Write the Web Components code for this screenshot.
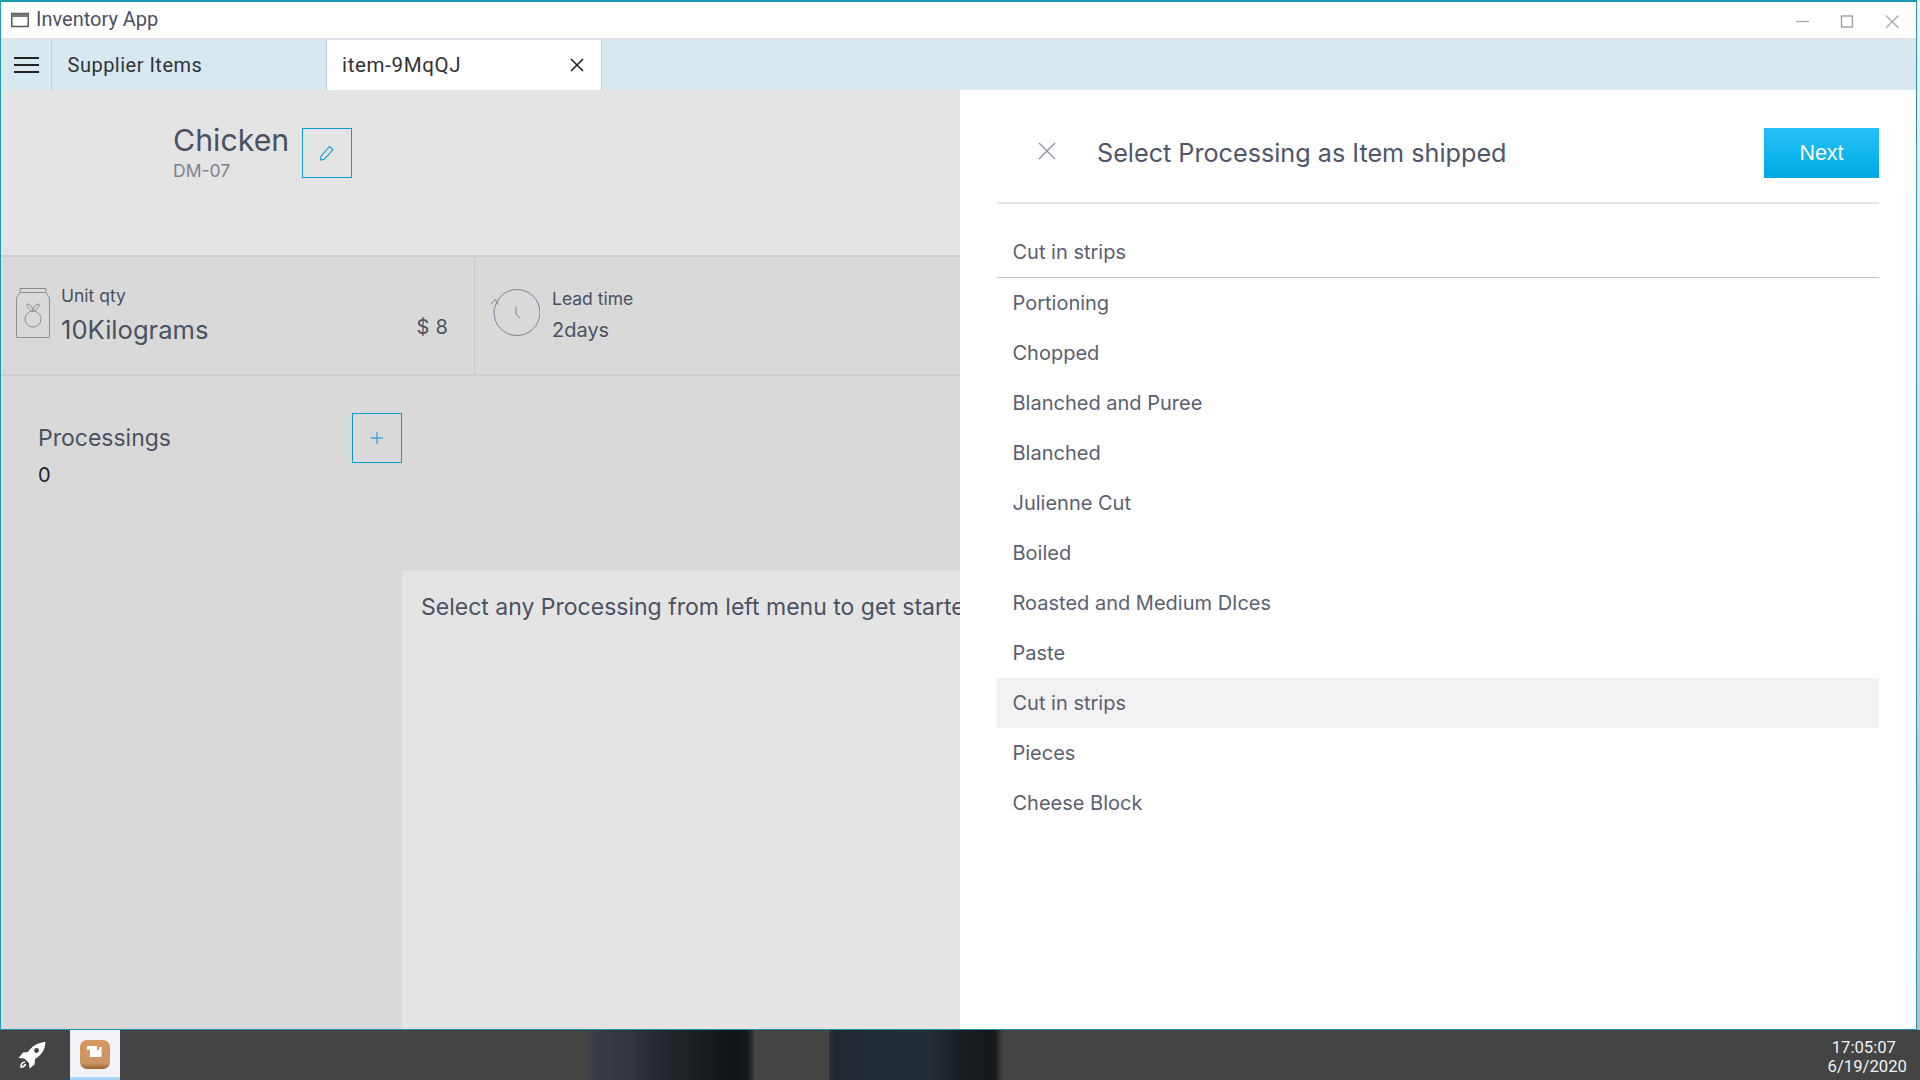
<!DOCTYPE html>
<html>
<head>
<meta charset="utf-8">
<title>Inventory App</title>
<style>
  html, body { margin: 0; height: 100%; overflow: hidden; }
  body { font-family: Inter, "Liberation Sans", sans-serif; background: #444; }
</style>
</head>
<body>
<app-desktop>
  <app-window>
    <app-tabs></app-tabs>
    <div style="display:flex;flex:1;min-height:0;">
      <item-detail></item-detail>
      <processing-panel heading="Select Processing as Item shipped" items='["Cut in strips","Portioning","Chopped","Blanched and Puree","Blanched","Julienne Cut","Boiled","Roasted and Medium DIces","Paste","Cut in strips","Pieces","Cheese Block"]'></processing-panel>
    </div>
  </app-window>
  <app-taskbar></app-taskbar>
</app-desktop>
<script>
class appDesktop extends HTMLElement {
  constructor() {
    super();
    this.attachShadow({mode: 'open'}).innerHTML = `
      <style>
        :host { display:flex; flex-direction:column; width:1920px; height:1080px; background:linear-gradient(#f4f4f4,#bbb); }
      </style>
      <slot></slot>`;
  }
}
customElements.define('app-desktop', appDesktop);

class appWindow extends HTMLElement {
  constructor() {
    super();
    this.attachShadow({mode: 'open'}).innerHTML = `
      <style>
        :host { display:flex; flex-direction:column; width:1917px; height:1030px; flex:none; box-sizing:border-box; background:#fff;
          border:1px solid #1d9bb5; border-top-width:2px; border-bottom-color:#1d8fa8; }
        .title { display:flex; align-items:center; height:36px; flex:none; border-bottom:2px solid #dfe3e8; }
        .title svg.logo { margin-left:10px; margin-right:7px; }
        .title span { font:20px Roboto, sans-serif; color:#4a5163; position:relative; top:-1px; }
        .ctl { margin-left:auto; display:flex; margin-right:1px; }
        .ctl svg { width:45px; height:36px; display:block; }
      </style>
      <div class="title">
        <svg class="logo" width="18" height="16" viewBox="0 0 18 16"><rect x=".8" y="1.500" width="16.400" height="13" fill="none" stroke="#555" stroke-width="1.500"/><rect x=".8" y="1.500" width="16.400" height="3.500" fill="#777"/></svg>
        <span>Inventory App</span>
        <div class="ctl">
          <svg viewBox="0 0 45 36"><path d="M16 19.500h13" stroke="#aaa" stroke-width="1.400"/></svg>
          <svg viewBox="0 0 45 36"><rect x="16.500" y="14" width="11" height="11" fill="none" stroke="#a0a0a0" stroke-width="1.400"/></svg>
          <svg viewBox="0 0 45 36"><path d="M16 13.500l12.500 12.500M28.500 13.500L16 26" stroke="#aaa" stroke-width="1.300"/></svg>
        </div>
      </div>
      <slot></slot>`;
  }
}
customElements.define('app-window', appWindow);

class appTabs extends HTMLElement {
  constructor() {
    super();
    this.attachShadow({mode: 'open'}).innerHTML = `
      <style>
        :host { display:flex; height:50px; flex:none; background:#d8e8f0; }
        .menu { width:50px; display:flex; align-items:center; justify-content:center; border-right:1px solid #b5d3e6; }
        .tab { display:flex; align-items:center; box-sizing:border-box; width:275px; padding-left:15.500px; border-right:1px solid #b5d3e6;
          font:20px Roboto, sans-serif; letter-spacing:.5px; color:#30343c; }
        .tab.on { background:#fff; color:#333; justify-content:space-between; padding-left:15px; padding-right:17px; font-size:20.500px; letter-spacing:.65px; }
      </style>
      <div class="menu"><svg width="25" height="18" viewBox="0 0 25 18"><path d="M0 2h25M0 9h25M0 16h25" stroke="#222" stroke-width="2"/></svg></div>
      <div class="tab">Supplier Items</div>
      <div class="tab on">item-9MqQJ<svg width="14" height="14" viewBox="0 0 14 14"><path d="M1 1l12 12M13 1L1 13" stroke="#222" stroke-width="1.600"/></svg></div>`;
  }
}
customElements.define('app-tabs', appTabs);

class itemDetail extends HTMLElement {
  constructor() {
    super();
    this.attachShadow({mode: 'open'}).innerHTML = `
      <style>
        :host { display:flex; flex-direction:column; width:959px; flex:none; background:#d9d9d9; color:#4a5163; overflow:hidden; }
        .hero { height:167px; box-sizing:border-box; flex:none; background:#e4e4e4; border-bottom:2px solid #cdcdcd; display:flex; align-items:flex-start; padding:38px 0 0 172px; }
        .hero .txt { margin-top:-6px; }
        .name { font-size:30.300px; line-height:36px; }
        .code { font-size:17.500px; line-height:20px; color:#7d8290; margin-top:3px; }
        .sq { width:50px; height:50px; box-sizing:border-box; border:1px solid #0f9bd0; display:flex; align-items:center; justify-content:center; flex:none; }
        .hero .sq { margin-left:13px; }
        .stats { height:119px; box-sizing:border-box; flex:none; display:flex; border-bottom:2px solid #cdcdcd; }
        .stat { display:flex; box-sizing:border-box; }
        .a { width:474px; border-right:1px solid #c8c8c8; padding:29px 26px 0 15px; }
        .b { flex:1; padding:32px 0 0 15px; }
        .lab { font-size:17.500px; line-height:20px; }
        .val { font-size:25.600px; line-height:30px; margin-top:9px; }
        .b .val { font-size:20px; margin-top:7px; line-height:28px; }
        .price { margin-left:auto; font-size:20px; align-self:flex-start; margin-top:29px; letter-spacing:.2px; }
        .a svg { margin:2px 11px 0 0; }
        .b svg { margin:-1px 12px 0 0; }
        .body { flex:1; display:flex; min-height:0; }
        .left { width:401px; flex:none; box-sizing:border-box; padding:37px 0 0 37px; }
        .proc { display:flex; align-items:center; justify-content:space-between; width:364px; height:50px; font-size:23px; }
        .cnt { color:#222; font-size:20px; margin-top:0; }
        .right { flex:1; padding-top:195px; display:flex; min-width:0; }
        .box { flex:1; background:#e4e4e4; padding:21px 0 0 19px; font-size:23px; white-space:nowrap; overflow:hidden; line-height:30px; }
      </style>
      <div class="hero">
        <div class="txt"><div class="name">Chicken</div><div class="code">DM-07</div></div>
        <div class="sq"><svg width="18" height="18" viewBox="0 0 18 18"><path d="M2.500 16l.5-3.800L11.500 2.500l3.500 3-8.500 9.700z" fill="none" stroke="#0f9bd0" stroke-width="1.100"/></svg></div>
      </div>
      <div class="stats">
        <div class="stat a">
          <svg width="34" height="50" viewBox="0 0 34 50"><g fill="none" stroke="#8f8f97" stroke-width="1"><path d="M4 .5h26v4H4zM4 4.500L.5 10v39.500h33V10L30 4.500"/><circle cx="17" cy="31" r="8"/><path d="M17 23c-4-1-6-4-6-7 3 0 6 3 6 7zM17 23c4-1 6-4 6-7-3 0-6 3-6 7z"/></g></svg>
          <div><div class="lab">Unit qty</div><div class="val">10Kilograms</div></div>
          <div class="price">$ 8</div>
        </div>
        <div class="stat b">
          <svg width="50" height="50" viewBox="0 0 50 50"><g fill="none" stroke="#7d8290" stroke-width="1"><path d="M5 19C8 8 17 1.500 27 1.500A23 23 0 1 1 4 24.500c0-2 0-4 1-5.500"/><path d="M1 16l4-4.500 3.500 5"/><path d="M26 19v7l4 4"/></g></svg>
          <div><div class="lab">Lead time</div><div class="val">2days</div></div>
        </div>
      </div>
      <div class="body">
        <div class="left">
          <div class="proc"><span>Processings</span>
            <div class="sq"><svg width="14" height="14" viewBox="0 0 14 14"><path d="M7 1v12M1 7h12" stroke="#3aa7d6" stroke-width="1.400"/></svg></div>
          </div>
          <div class="cnt">0</div>
        </div>
        <div class="right"><div class="box">Select any Processing from left menu to get started</div></div>
      </div>`;
  }
}
customElements.define('item-detail', itemDetail);

class processingPanel extends HTMLElement {
  constructor() {
    super();
    this.attachShadow({mode: 'open'}).innerHTML = `
      <style>
        :host { display:block; flex:1; background:#fff; box-sizing:border-box; padding:38px 37px 0 37px; min-width:0; color:#4a5163; }
        .head { display:flex; align-items:center; height:50px; }
        .head svg { margin:-5px 0 0 41px; }
        .head h2 { font-size:25.200px; font-weight:400; margin:0 0 0 41px; flex:1; color:#50566a; }
        .next { width:115px; height:50px; background:linear-gradient(#25c2f8,#00a8e2); color:#fff; font:21.500px "Liberation Sans", sans-serif; display:flex; align-items:center; justify-content:center; }
        hr { border:0; border-top:2px solid #e4e4e4; margin:24px 0 23px; }
        .row { height:50px; display:flex; align-items:center; padding-left:15.500px; font-size:20px; color:#5a6070; box-sizing:border-box; }
        .row.first { border-bottom:1px solid #c4c4c4; height:51px; }
        .row.hover { background:#f2f2f2; }
      </style>
      <div class="head">
        <svg width="18" height="18" viewBox="0 0 18 18"><path d="M1 1l16 16M17 1L1 17" stroke="#8e92a0" stroke-width="1.300"/></svg>
        <h2></h2>
        <div class="next">Next</div>
      </div>
      <hr>
      <div class="list"></div>`;
  }
  connectedCallback() {
    this.shadowRoot.querySelector('h2').textContent = this.getAttribute('heading');
    const items = JSON.parse(this.getAttribute('items')) || [];
    const list = this.shadowRoot.querySelector('.list');
    items.forEach((name, index) => {
      const row = document.createElement('div');
      row.className = 'row' + (index == 0 ? ' first' : '') + (index == 9 ? ' hover' : '');
      row.textContent = name;
      list.appendChild(row);
    });
  }
}
customElements.define('processing-panel', processingPanel);

class appTaskbar extends HTMLElement {
  constructor() {
    super();
    this.attachShadow({mode: 'open'}).innerHTML = `
      <style>
        :host { display:flex; height:50px; flex:none; background:#444; overflow:hidden; }
        .rocket { width:70px; box-sizing:border-box; padding-left:18px; display:flex; align-items:center; }
        .app { width:50px; background:#f1f3f9; box-sizing:border-box; border-bottom:3px solid #a9d2f5; display:flex; align-items:center; justify-content:center; }
        .wall { flex:1; display:flex; padding-left:464px; }
        .leg { width:170px; background:linear-gradient(90deg,#434547,#353c42 8%,#32383e 25%,#20262a 50%,#1a1e20 68%,#111517 85%,#14181a 96%,#3a3a3a); }
        .leg.two { margin-left:75px; width:174px; background:linear-gradient(90deg,#2a3036,#20282f 4%,#222e37 30%,#232d35 60%,#191d20 75%,#151719 95%,#444); }
        .clock { width:130px; box-sizing:border-box; text-align:right; padding:8px 13px 0 0; font:16.700px/19px Roboto, sans-serif; color:#eef2f6; }
        .clock span { display:block; padding-right:11px; }
      </style>
      <div class="rocket"><svg width="28" height="28" viewBox="0 0 28 28"><path fill="#fff" d="M27.500 1C20 1.500 14 5 10 11l-5 .5L.5 17l6 .5L11 22l.5 5.500 5-4 .5-5.500C23.500 14 27 9 27.500 1z"/><circle cx="18.500" cy="9.500" r="2.400" fill="#444"/><path d="M7 21c-3 0-4 2-4 5 3 0 4-1 4.500-3" fill="none" stroke="#fff" stroke-width="1.600"/></svg></div>
      <div class="app"><svg width="30" height="30" viewBox="0 0 30 30"><defs><linearGradient id="g" x1="0" y1="0" x2="0" y2="1"><stop offset="0" stop-color="#d8965a"/><stop offset=".8" stop-color="#cb9464"/><stop offset="1" stop-color="#a0622e"/></linearGradient></defs><rect width="30" height="29" y="1" rx="7" fill="url(#g)"/><path d="M7 7h10v4h2V8h3l-.5 3v7H10v-7H7z" fill="#fff"/></svg></div>
      <div class="wall"><div class="leg"></div><div class="leg two"></div></div>
      <div class="clock"><span>17:05:07</span>6/19/2020</div>`;
  }
}
customElements.define('app-taskbar', appTaskbar);
</script>
</body>
</html>
